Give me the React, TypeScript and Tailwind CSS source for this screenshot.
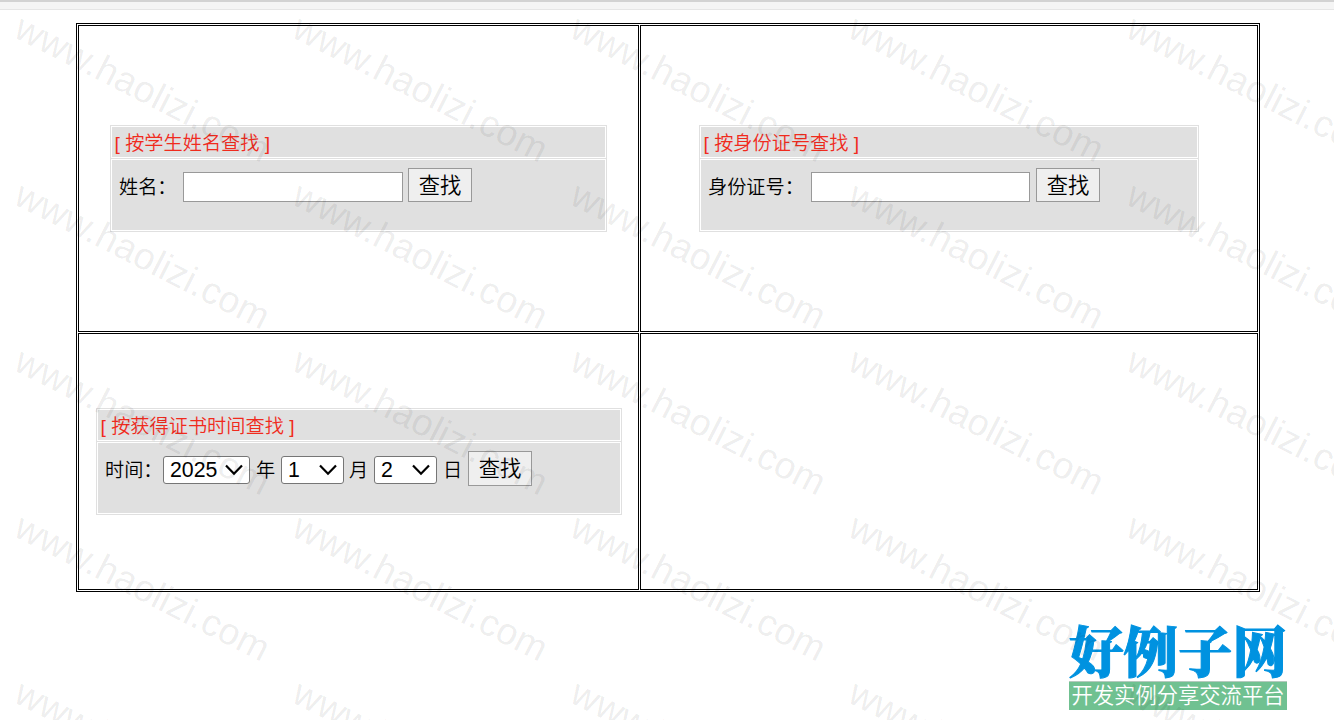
import { ReactNode } from 'react';
import clsx from 'clsx';

const watermarks = Array.from({ length: 25 }, (_, i) => i);

function SearchPanel({ title, className, children }: { title: string; className: string; children: ReactNode }) {
  return (
    <form
      className={clsx('flex h-[107px] flex-col border border-[#e0e0e0] bg-white', className)}
      onSubmit={(e) => e.preventDefault()}
    >
      <div className="border-b border-[#e0e0e0] p-px">
        <h2 className="h-[30px] whitespace-pre bg-[#e0e0e0] pl-[2.5px] text-[19.2px] leading-[34px] font-[350] text-[#f02b1d]">
          {title}
        </h2>
      </div>
      <div className="flex-1 p-px">
        <div className="flex h-[70px] items-start bg-[#e0e0e0] pl-[7px] text-[19.2px] leading-[28px] font-[350]">
          {children}
        </div>
      </div>
    </form>
  );
}

function SearchButton({ className }: { className: string }) {
  return (
    <button
      type="submit"
      className={clsx('w-16 border border-[#999] bg-[#efefef] text-center text-[21.3px] leading-[34px] font-[350]', className)}
    >
      查找
    </button>
  );
}

function DateSelect({ value, className }: { value: string; className: string }) {
  return (
    <div
      role="combobox"
      className={clsx(
        'mt-[13px] flex h-7 items-center justify-between rounded-[3px] border border-[#767676] bg-white pr-[6px] pl-[6px] text-[21.3px] leading-none font-normal',
        className
      )}
    >
      <span className="pt-px">{value}</span>
      <svg width="18" height="12" viewBox="0 0 18 12" fill="none" stroke="#000" strokeWidth="2.2">
        <path d="M1 1.5L9 9.7L17 1.5" />
      </svg>
    </div>
  );
}

function Watermark() {
  return (
    <div className="pointer-events-none absolute inset-0 overflow-hidden">
      <div className="grid auto-rows-[166.3px] grid-cols-[repeat(5,278px)] pt-[5.3px] pl-[28px]">
        {watermarks.map((n) => (
          <div key={n}>
            <span className="block w-max origin-top-left rotate-[27deg] text-[37.5px] leading-[44px] tracking-[0.2px] text-black/8">
              www.haolizi.com
            </span>
          </div>
        ))}
      </div>
    </div>
  );
}

export default function App() {
  return (
    <div className="relative h-[720px] w-[1334px] overflow-hidden bg-white font-['Liberation_Sans','Noto_Sans_CJK_SC',sans-serif] text-black">
      <div className="h-[10px] border-t-2 border-b border-t-[#d3d3d3] border-b-[#e6e6e6] bg-[#f5f5f5]" />

      <main className="mt-[13px] ml-[76px] grid h-[569px] w-[1184px] grid-cols-[561px_618px] grid-rows-[307px_257px] gap-px border border-black p-px">
        <section className="border border-black pt-[99px] pl-[31px]">
          <SearchPanel title="[ 按学生姓名查找 ]" className="w-[497px]">
            <label className="mt-[14px] w-[64px]">姓名：</label>
            <input type="text" className="mt-[12px] h-[30px] w-[220px] border border-[#999] bg-white" />
            <SearchButton className="mt-2 ml-[5px] h-[34px]" />
          </SearchPanel>
        </section>

        <section className="border border-black pt-[99px] pl-[58px]">
          <SearchPanel title="[ 按身份证号查找 ]" className="w-[500px]">
            <label className="mt-[14px] w-[103px]">身份证号：</label>
            <input type="text" className="mt-[12px] h-[30px] w-[219px] border border-[#999] bg-white" />
            <SearchButton className="mt-2 ml-[6px] h-[34px]" />
          </SearchPanel>
        </section>

        <section className="border border-black pt-[74px] pl-[17px]">
          <SearchPanel title="[ 按获得证书时间查找 ]" className="w-[526px]">
            <span className="mt-[14px] w-[58px] whitespace-nowrap">时间：</span>
            <DateSelect value="2025" className="w-[87px]" />
            <span className="mt-[14px] w-[31px] pl-[6px]">年</span>
            <DateSelect value="1" className="w-[63px]" />
            <span className="mt-[14px] w-[30px] pl-[5px]">月</span>
            <DateSelect value="2" className="w-[63px]" />
            <span className="mt-[14px] w-[31px] pl-[6px]">日</span>
            <SearchButton className="mt-2 h-[35px]" />
          </SearchPanel>
        </section>

        <section className="border border-black" />
      </main>

      {/* site badge floats over the page corner */}
      <div className="absolute top-[624px] left-[1069px] w-[218px] text-center">
        <div className="h-[57px] font-['Noto_Serif_CJK_SC','Noto_Sans_CJK_SC',serif] text-[54.5px] leading-[49px] font-black whitespace-nowrap text-[#0092e0] [-webkit-text-stroke:1px_#0092e0]">
          好例子网
        </div>
        <div className="h-[29px] border-t border-[#b5c9bd] bg-[#70c191] text-[21.3px] leading-[28px] font-[350] whitespace-nowrap text-white">
          开发实例分享交流平台
        </div>
      </div>

      <Watermark />
    </div>
  );
}
